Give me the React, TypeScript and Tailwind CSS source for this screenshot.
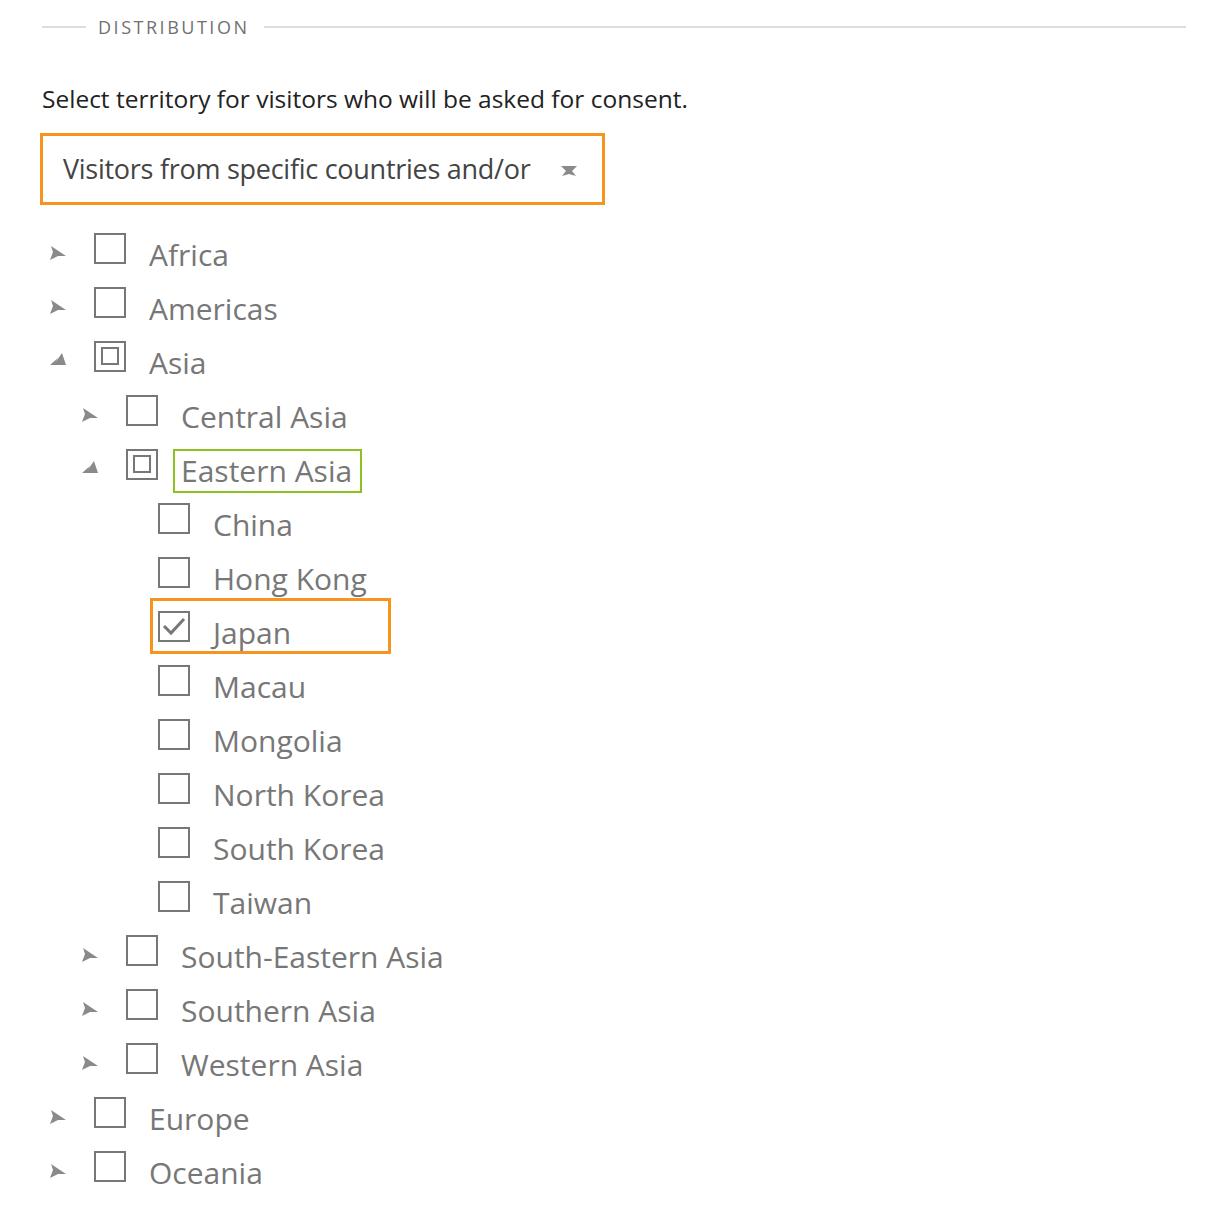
import React from 'react';

type Node = {
  label: string;
  level: number;
  arrow?: 'collapsed' | 'expanded';
  state?: 'empty' | 'partial' | 'checked';
  focus?: boolean;
  selected?: boolean;
};

const rows: Node[] = [
  { label: 'Africa', level: 0, arrow: 'collapsed' },
  { label: 'Americas', level: 0, arrow: 'collapsed' },
  { label: 'Asia', level: 0, arrow: 'expanded', state: 'partial' },
  { label: 'Central Asia', level: 1, arrow: 'collapsed' },
  { label: 'Eastern Asia', level: 1, arrow: 'expanded', state: 'partial', focus: true },
  { label: 'China', level: 2 },
  { label: 'Hong Kong', level: 2 },
  { label: 'Japan', level: 2, state: 'checked', selected: true },
  { label: 'Macau', level: 2 },
  { label: 'Mongolia', level: 2 },
  { label: 'North Korea', level: 2 },
  { label: 'South Korea', level: 2 },
  { label: 'Taiwan', level: 2 },
  { label: 'South-Eastern Asia', level: 1, arrow: 'collapsed' },
  { label: 'Southern Asia', level: 1, arrow: 'collapsed' },
  { label: 'Western Asia', level: 1, arrow: 'collapsed' },
  { label: 'Europe', level: 0, arrow: 'collapsed' },
  { label: 'Oceania', level: 0, arrow: 'collapsed' },
];

function Arrow({ kind }: { kind: 'collapsed' | 'expanded' }) {
  if (kind === 'collapsed') {
    return (
      <svg width="18" height="16" viewBox="0 0 18 16" className="ml-[7px] mb-[4px]">
        <polygon points="2,1 17,11 9,11 1,15 4,7" fill="#8a8a8a" />
      </svg>
    );
  }
  return (
    <svg width="18" height="14" viewBox="0 0 18 14" className="ml-[7px] mb-[8px]">
      <polygon points="1,13 9,6 6,11 13,1 17,13" fill="#8a8a8a" />
    </svg>
  );
}

function Checkbox({ state = 'empty' }: { state?: Node['state'] }) {
  return (
    <div className="w-[32px] h-[31px] mb-[14px] border-2 border-[#777] bg-white flex items-center justify-center shrink-0">
      {state === 'partial' && <div className="w-[18px] h-[18px] border-2 border-[#777]" />}
      {state === 'checked' && (
        <svg width="26" height="22" viewBox="0 0 26 22">
          <polyline points="3,11 10,18 23,4" fill="none" stroke="#777" strokeWidth="3" />
        </svg>
      )}
    </div>
  );
}

export default function App() {
  return (
    <div className="bg-white min-h-screen px-[42px] pt-[16px] pb-[20px] font-['Open_Sans',sans-serif]">
      <div className="flex items-center h-[22px]">
        <div className="w-[44px] h-[2px] bg-[#dedede]" />
        <span className="ml-[12px] mr-[14px] text-[18px] tracking-[0.14em] text-[#707070] leading-none">DISTRIBUTION</span>
        <div className="flex-1 h-[2px] bg-[#dedede]" />
      </div>

      <p className="mt-[45px] text-[24.5px] leading-[32px] text-[#222]">
        Select territory for visitors who will be asked for consent.
      </p>

      <div className="mt-[18px] -ml-[2px] w-[565px] h-[72px] border-[3px] border-[#f7941d] flex items-center justify-between pl-[20px] pr-[24px]">
        <span className="text-[27px] text-[#444] tracking-[-0.01em]">Visitors from specific countries and/or</span>
        <svg width="18" height="13" viewBox="0 0 18 13" className="mt-[4px]">
          <polygon points="1,1 17,1 12,6 16,11 9,9 2,11 6,6" fill="#8a8a8a" />
        </svg>
      </div>

      <div className="mt-[23px]">
        {rows.map((r) => (
          <div
            key={r.label}
            className="flex items-center h-[54px]"
            style={{ paddingLeft: r.level * 32 }}
          >
            <div className="w-[52px] flex items-center shrink-0">{r.arrow && <Arrow kind={r.arrow} />}</div>
            <div className="relative flex items-center h-full">
              {r.selected && (
                <span className="absolute left-[-8px] top-[-8px] w-[241px] h-[56px] border-[3px] border-[#f7941d] pointer-events-none" />
              )}
              <Checkbox state={r.state} />
              {r.focus ? (
                <span className="ml-[15px] h-[44px] flex items-center pl-[6px] pr-[8px] border-2 border-[#8cc21f] text-[30px] text-[#777] leading-none">
                  {r.label}
                </span>
              ) : (
                <span className="ml-[23px] text-[30px] text-[#777] leading-none">{r.label}</span>
              )}
            </div>
          </div>
        ))}
      </div>
    </div>
  );
}
